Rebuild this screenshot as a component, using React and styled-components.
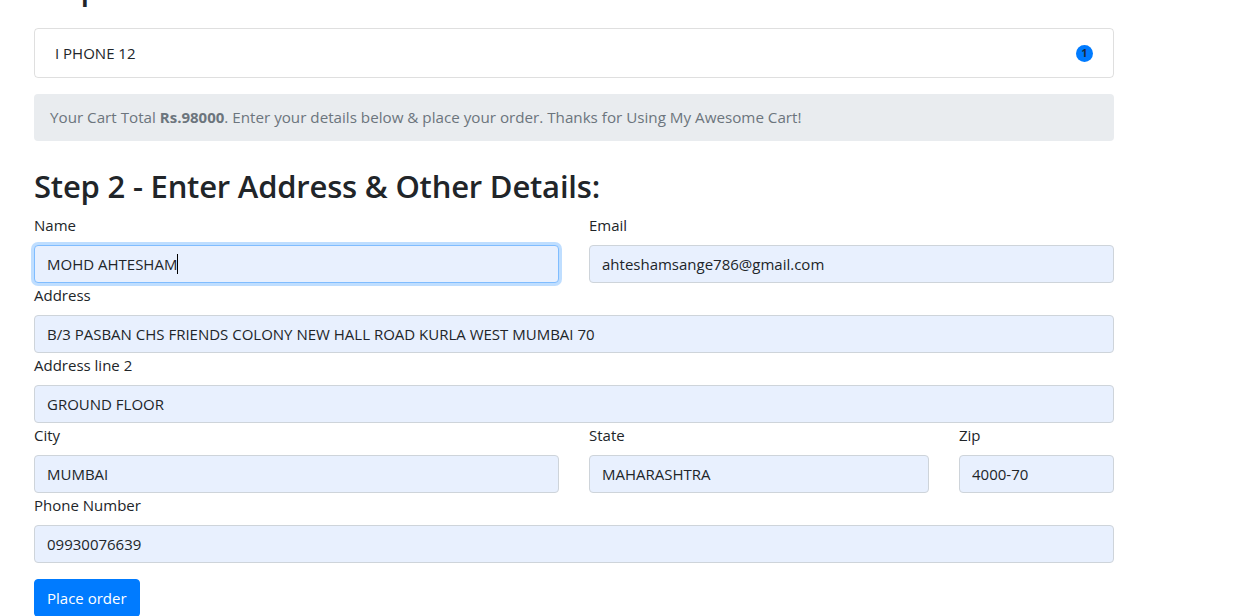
import React from "react";
import styled, { createGlobalStyle } from "styled-components";

const GlobalStyle = createGlobalStyle`
  html, body {
    margin: 0;
    padding: 0;
    background: #fff;
    color: #212529;
    font-family: "Open Sans", "Noto Sans", sans-serif;
    font-size: 15px;
    line-height: 1.5;
  }
  * { box-sizing: border-box; }
`;

// page is scrolled a little: the first heading sits mostly above the top edge
const Page = styled.div`
  width: 1080px;
  margin: -30px 0 0 34px;
`;

const Heading = styled.h2`
  font-size: 31px;
  font-weight: 600;
  line-height: 1.2;
  margin: ${(p) => (p.$first ? "0 0 21px" : "27px 0 8px")};
  letter-spacing: -0.2px;
`;

const ListGroup = styled.ul`
  list-style: none;
  margin: 0 0 16px;
  padding: 0;
`;

const ListItem = styled.li`
  display: flex;
  align-items: center;
  justify-content: space-between;
  height: 50px;
  padding: 0 20px;
  border: 1px solid rgba(0, 0, 0, 0.125);
  border-radius: 4px;
`;

const Badge = styled.span`
  display: inline-flex;
  align-items: center;
  justify-content: center;
  width: 17px;
  height: 17px;
  border-radius: 50%;
  background: #007bff;
  color: #1d2a3a;
  font-size: 11px;
  font-weight: 700;
`;

const Alert = styled.div`
  background: #e9ecef;
  color: #6c757d;
  padding: 12px 16px;
  border-radius: 4px;
  height: 47px;
  font-size: 15.2px;

  b {
    font-weight: 700;
    font-size: 15px;
  }
`;

const Row = styled.div`
  display: grid;
  grid-template-columns: ${(p) => p.$cols || "1fr"};
  column-gap: 30px;
`;

const Group = styled.div`
  display: flex;
  flex-direction: column;
`;

const Label = styled.label`
  display: block;
  height: 24px;
  line-height: 24px;
  margin-bottom: 8px;
`;

const InputWrap = styled.div`
  position: relative;
`;

const Input = styled.input`
  display: block;
  width: 100%;
  height: 38px;
  padding: 6px 12px;
  font-family: inherit;
  font-size: 15px;
  color: #212529;
  background: #e8f0fe;
  border: 1px solid ${(p) => (p.$focused ? "#80bdff" : "#ced4da")};
  border-radius: 4px;
  outline: none;
  caret-color: transparent;
  box-shadow: ${(p) =>
    p.$focused ? "0 0 0 3px rgba(0, 123, 255, 0.25)" : "none"};
`;

// text caret drawn over the focused field
const CaretLayer = styled.div`
  position: absolute;
  top: 0;
  left: 13px;
  height: 38px;
  display: flex;
  align-items: center;
  font-size: 15px;
  pointer-events: none;

  span {
    visibility: hidden;
  }

  &::after {
    content: "";
    width: 1px;
    height: 20px;
    background: #000;
  }
`;

const Button = styled.button`
  margin-top: 16px;
  height: 38px;
  padding: 0 12px;
  font-family: inherit;
  font-size: 15px;
  color: #fff;
  background: #007bff;
  border: 1px solid #007bff;
  border-radius: 4px;
`;

const Field = ({ label, value, focused }) => (
  <Group>
    <Label>{label}</Label>
    <InputWrap>
      <Input defaultValue={value} $focused={focused} />
      {focused && (
        <CaretLayer>
          <span>{value}</span>
        </CaretLayer>
      )}
    </InputWrap>
  </Group>
);

const App = () => {
  return (
    <>
      <GlobalStyle />
      <Page>
        <Heading $first>Step 1 - Review Your Cart Items:</Heading>
        <ListGroup>
          <ListItem>
            I PHONE 12
            <Badge>1</Badge>
          </ListItem>
        </ListGroup>
        <Alert>
          Your Cart Total <b>Rs.98000</b>. Enter your details below &amp; place
          your order. Thanks for Using My Awesome Cart!
        </Alert>

        <Heading>Step 2 - Enter Address &amp; Other Details:</Heading>
        <Row $cols="1fr 1fr">
          <Field label="Name" value="MOHD AHTESHAM" focused />
          <Field label="Email" value="ahteshamsange786@gmail.com" />
        </Row>
        <Field
          label="Address"
          value="B/3 PASBAN CHS FRIENDS COLONY NEW HALL ROAD KURLA WEST MUMBAI 70"
        />
        <Field label="Address line 2" value="GROUND FLOOR" />
        <Row $cols="525px 340px 155px">
          <Field label="City" value="MUMBAI" />
          <Field label="State" value="MAHARASHTRA" />
          <Field label="Zip" value="4000-70" />
        </Row>
        <Field label="Phone Number" value="09930076639" />
        <Button>Place order</Button>
      </Page>
    </>
  );
};

export default App;
